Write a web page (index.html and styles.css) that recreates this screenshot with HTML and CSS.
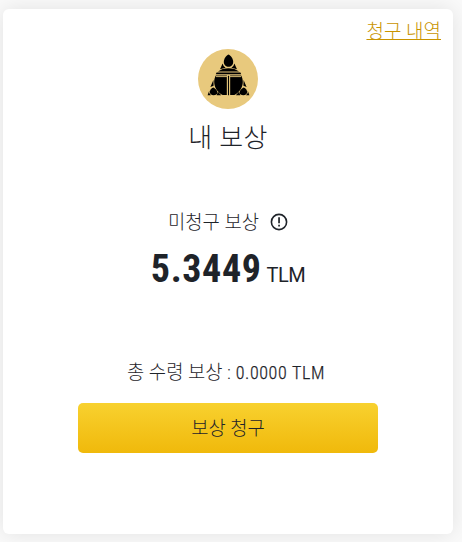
FILE: index.html
```html
<!DOCTYPE html>
<html lang="ko">
<head>
    <meta charset="UTF-8">
    <meta name="viewport" content="width=device-width, initial-scale=1.0">
    <title>내 보상</title>
    <link rel="stylesheet" href="styles.css">
</head>
<body>
    <div class="card">
        <a class="history" href="#">청구 내역</a>
        <svg class="logo" viewBox="0 0 60 60">
            <circle cx="30" cy="30" r="30" fill="#e8c97d"/>
            <path d="M30.5 5.5C33 6.5 35.2 10 35.2 13C35.2 15.8 33 17.8 30.5 17.8S25.8 15.8 25.8 13C25.8 10 28 6.5 30.5 5.5Z"/>
            <path d="M24.6 14.6L25.6 17L27.6 18.8L22 20.2ZM36.4 14.6L35.4 17L33.4 18.8L39 20.2Z"/>
            <path d="M20 22.6Q24 19.2 30.5 19.2T41 22.6ZM18.6 23.6H42.4L43.2 25.2H17.8Z"/>
            <path d="M17.8 26.4H28.9V46H24.6C19.8 43.6 16.2 38.6 16.2 33C16.2 30.6 16.8 28.2 17.8 26.4ZM43.2 26.4H32.1V46H36.4C41.2 43.6 44.8 38.6 44.8 33C44.8 30.6 44.2 28.2 43.2 26.4Z"/>
            <path d="M30 27H31V46H30Z" stroke="#000" stroke-width=".5"/>
            <path d="M18 27.6H29.4V46M43 27.6H31.6V46" fill="none" stroke="#e8c97d" stroke-width=".9"/>
            <path d="M15.4 31L15.6 36.8L12.4 38ZM45.6 31L45.4 36.8L48.6 38Z"/>
            <path d="M15.3 38.4C17.6 39.4 19.4 41.4 19.4 43.4C19.4 45.2 17.8 46.2 15.6 46.2S11.8 45 11.8 43C11.8 41 13.2 39.2 15.3 38.4ZM45.7 38.4C43.4 39.4 41.6 41.4 41.6 43.4C41.6 45.2 43.2 46.2 45.4 46.2S49.2 45 49.2 43C49.2 41 47.8 39.2 45.7 38.4Z"/>
            <path d="M11.3 41.6L11.2 44L13 46.2H9.6ZM49.7 41.6L49.8 44L48 46.2H51.4ZM20 42.8L23.2 46.2H18.6ZM41 42.8L37.8 46.2H42.4Z"/>
        </svg>
        <h1 class="title">내 보상</h1>
        <div class="label">
            <span>미청구 보상</span>
            <svg class="info" viewBox="0 0 18 18">
                <circle cx="9" cy="9" r="7.6" fill="none" stroke="#1e2329" stroke-width="1.6"/>
                <path d="M8.2 4.3H9.9V10.3H8.2ZM8.2 11.8H9.9V13.5H8.2Z" fill="#1e2329"/>
            </svg>
        </div>
        <div class="amount">
            <span class="value">5.3449</span>
            <span class="unit">TLM</span>
        </div>
        <p class="total">총 수령 보상 : <span class="num">0.0000 TLM</span></p>
        <button class="claim">보상 청구</button>
    </div>
</body>
</html>
```
FILE: styles.css
```css
* {
    box-sizing: border-box;
}
body {
    margin: 0;
    padding: 9px 9px 8px 3px;
    height: 542px;
    overflow: hidden;
    background: #fafafa;
    color: #1e2329;
    font-family: Roboto, "Noto Sans CJK KR", sans-serif;
    font-weight: 300;
}
.card {
    display: flex;
    flex-direction: column;
    align-items: center;
    width: 450px;
    height: 525px;
    padding: 9px 12px 0;
    background: #fff;
    border-radius: 6px;
    box-shadow: 0 0 22px rgba(0, 0, 0, 0.1);
}
.history {
    align-self: flex-end;
    height: 31px;
    line-height: 28px;
    font-size: 19px;
    color: #c99400;
    text-decoration: underline;
    text-decoration-thickness: 1px;
    text-underline-offset: 1px;
}
.logo {
    width: 60px;
    height: 60px;
}
.title {
    margin: 11px 0 0;
    height: 36px;
    line-height: 36px;
    font-size: 26px;
    font-weight: 300;
    letter-spacing: 0.3px;
}
.label {
    display: flex;
    align-items: center;
    gap: 11px;
    height: 28px;
    margin-top: 50px;
    font-size: 18.8px;
}
.info {
    width: 18px;
    height: 18px;
    margin-top: 3px;
}
.amount {
    display: flex;
    align-items: baseline;
    gap: 5px;
    height: 50px;
    margin-top: 10px;
    line-height: 50px;
}
.value {
    font-size: 38px;
    font-weight: 700;
    font-stretch: 75%;
    letter-spacing: 0.6px;
}
.unit {
    font-size: 20px;
    font-weight: 400;
    letter-spacing: -0.5px;
}
.total {
    height: 28px;
    margin: 65px 4px 16px 0;
    line-height: 28px;
    font-size: 18.8px;
}
.num {
    font-size: 18px;
    font-weight: 300;
    font-stretch: 75%;
    letter-spacing: 0.6px;
    -webkit-text-stroke: 0.25px #1e2329;
}
.claim {
    width: 300px;
    height: 50px;
    padding: 0 0 4px;
    border: none;
    border-radius: 5px;
    background: linear-gradient(#f8d12f, #f0b90b);
    color: #1e2329;
    font-family: inherit;
    font-size: 18.8px;
    font-weight: 300;
    cursor: pointer;
}
```
